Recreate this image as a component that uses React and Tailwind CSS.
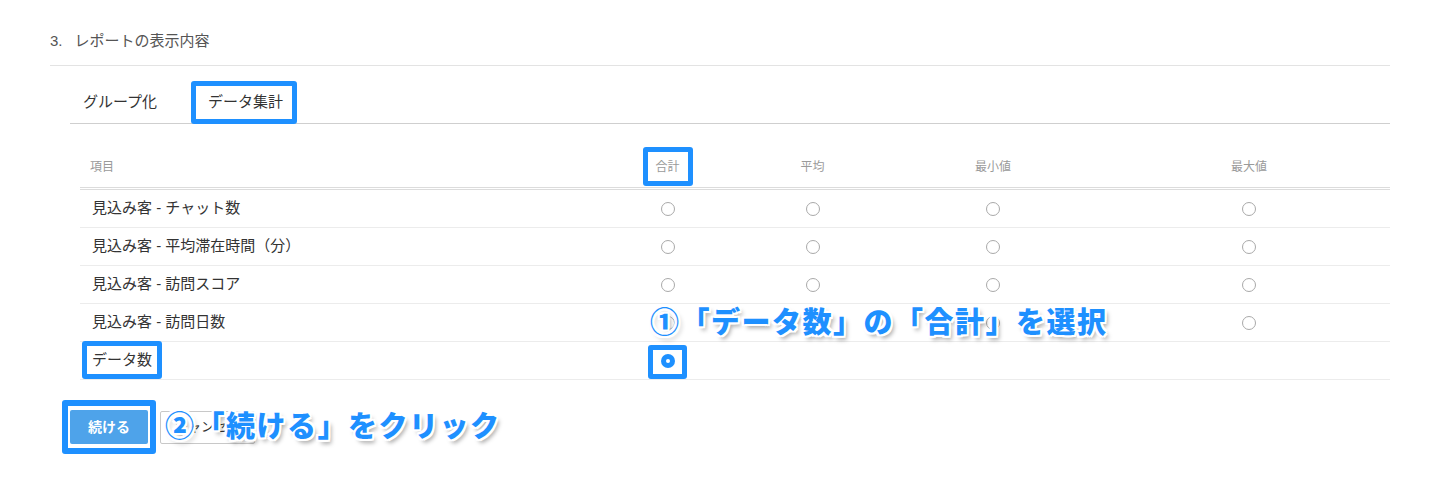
import React from 'react';

const rows = [
    { label: '見込み客 - チャット数', cols: [true, true, true, true] },
    { label: '見込み客 - 平均滞在時間（分）', cols: [true, true, true, true] },
    { label: '見込み客 - 訪問スコア', cols: [true, true, true, true] },
    { label: '見込み客 - 訪問日数', cols: [true, true, true, true], note: true },
];

const Radio = () => (
    <span className="inline-block w-[14px] h-[14px] rounded-full border border-[#a9a9a9] bg-white" />
);

const Mark = ({ className }) => (
    <span className={`pointer-events-none absolute rounded-[3px] border-[5px] border-[#1e90ff] ${className}`} />
);

const Note = ({ children, className }) => (
    <div
        className={`pointer-events-none absolute whitespace-nowrap font-black text-[29px] leading-none tracking-[1.5px] text-[#1e90ff] [text-shadow:2px_0_0_#fff,-2px_0_0_#fff,0_2px_0_#fff,0_-2px_0_#fff,2px_2px_0_#fff,-2px_-2px_0_#fff,2px_-2px_0_#fff,-2px_2px_0_#fff,3px_4px_4px_rgba(0,0,0,0.35)] ${className}`}
    >
        {children}
    </div>
);

const App = () => {
    return (
        <div className="min-h-screen bg-white font-['Liberation_Sans','Noto_Sans_CJK_JP',sans-serif] text-[#333]">
            <div className="px-[50px] pt-[31px]">
                {/* Section title */}
                <h2 className="text-[15px] leading-[20px] text-[#555] pb-[14px] border-b border-[#e3e3e3]">
                    3.<span className="ml-[12px]">レポートの表示内容</span>
                </h2>

                <div className="pl-[20px]">
                    {/* Tabs */}
                    <div className="mt-[15px] flex gap-[21px] border-b border-[#cfcfcf]">
                        <div className="h-[42px] flex items-center pl-[13px] pr-[13px] text-[15px]">グループ化</div>
                        <div className="relative h-[42px] flex items-center pl-[17px] pr-[14px] text-[15px]">
                            データ集計
                            <Mark className="inset-0 -bottom-[1px]" />
                        </div>
                    </div>

                    {/* Table */}
                    <div className="ml-[10px] mt-[23px]">
                        <div className="grid grid-cols-[515px_145px_145px_216px_1fr] h-[43px] items-center border-b-[3px] border-double border-[#dcdcdc] text-[12px] text-[#9a9a9a]">
                            <div className="pl-[10px]">項目</div>
                            <div className="flex justify-center">
                                <span className="relative">
                                    合計
                                    <Mark className="-left-[12px] -right-[13px] -top-[11px] -bottom-[10px]" />
                                </span>
                            </div>
                            <div className="text-center">平均</div>
                            <div className="text-center">最小値</div>
                            <div className="text-center pl-[7px]">最大値</div>
                        </div>

                        {rows.map((row, idx) => (
                            <div
                                key={idx}
                                className="relative grid grid-cols-[515px_145px_145px_216px_1fr] h-[38px] items-center border-b border-[#ececec] text-[15px]"
                            >
                                <div className="pl-[12px]">{row.label}</div>
                                <div className="flex justify-center"><Radio /></div>
                                <div className="flex justify-center"><Radio /></div>
                                <div className="flex justify-center"><Radio /></div>
                                <div className="flex justify-center pl-[7px]"><Radio /></div>
                                {row.note && (
                                    <Note className="left-[570px] top-1/2 -translate-y-1/2">
                                        ①「データ数」の「合計」を選択
                                    </Note>
                                )}
                            </div>
                        ))}

                        <div className="grid grid-cols-[515px_145px_145px_216px_1fr] h-[38px] items-center border-b border-[#ececec] text-[15px]">
                            <div className="pl-[12px]">
                                <span className="relative">
                                    データ数
                                    <Mark className="-left-[10px] -right-[10px] -top-[10px] -bottom-[11px]" />
                                </span>
                            </div>
                            <div className="flex justify-center">
                                <span className="relative flex">
                                    <span className="w-[14px] h-[14px] rounded-full bg-[#1e90ff] flex items-center justify-center">
                                        <span className="w-[4px] h-[4px] rounded-full bg-white" />
                                    </span>
                                    <Mark className="-left-[13px] -right-[12px] -top-[9px] -bottom-[11px]" />
                                </span>
                            </div>
                        </div>
                    </div>

                    {/* Buttons */}
                    <div className="relative mt-[30px] flex items-center gap-[12px]">
                        <button className="relative h-[34px] w-[78px] rounded-[2px] bg-[#4ea3ea] text-white text-[14px] font-bold">
                            続ける
                            <Mark className="-left-[8px] -right-[8px] -top-[10px] -bottom-[10px] border-[6px]" />
                        </button>
                        <button className="h-[33px] px-[14px] rounded-[2px] border border-[#c8c8c8] bg-white text-[13px] text-[#333]">
                            キャンセル
                        </button>
                        <Note className="left-[95px] top-1/2 -translate-y-1/2">
                            ②「続ける」をクリック
                        </Note>
                    </div>
                </div>
            </div>
        </div>
    );
};

export default App;
